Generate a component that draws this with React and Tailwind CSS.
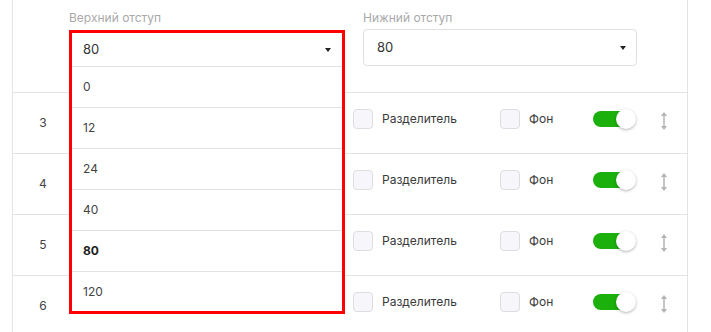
import React from 'react'

const OPTIONS = ['0', '12', '24', '40', '80', '120']
const ROWS = [3, 4, 5, 6]

function Caret() {
  return (
    <svg width="6" height="4" viewBox="0 0 6 4" className="shrink-0">
      <polygon points="0,0 6,0 3,4" fill="#222" />
    </svg>
  )
}

function Checkbox({ label, width }) {
  return (
    <div className={`flex items-center gap-[9px] ${width}`}>
      <div className="size-[20px] rounded-[4px] border border-[#dcdce2] bg-[#f7f7fb]" />
      <span className="text-[12px] text-[#3a3a3a]">{label}</span>
    </div>
  )
}

function Toggle() {
  return (
    <div className="relative w-[42px] h-[16px] rounded-full bg-[#1cb00c]">
      <div className="absolute right-[-1px] top-[-2px] size-[20px] rounded-full bg-white shadow-[0_1px_3px_rgba(0,0,0,0.3)]" />
    </div>
  )
}

function DragIcon() {
  return (
    <svg width="8" height="18" viewBox="0 0 8 18">
      <line x1="4" y1="3" x2="4" y2="15" stroke="#b3b3b3" strokeWidth="1.5" />
      <polygon points="4,0 7,4 1,4" fill="#b3b3b3" />
      <polygon points="4,18 7,14 1,14" fill="#b3b3b3" />
    </svg>
  )
}

export default function App() {
  return (
    <div className="relative w-[711px] h-[332px] overflow-hidden bg-white font-['Inter',sans-serif]">
      <div className="ml-3 w-[676px] border-x border-[#e3e3e3]">
        {/* top: margins */}
        <div className="flex h-[93px] border-b border-[#e3e3e3] pl-[56px] pt-[10px]">
          <div className="w-[294px]">
            <div className="text-[12px] text-[#a9a9a9] leading-[16px]">Верхний отступ</div>
          </div>
          <div>
            <div className="text-[12px] text-[#a9a9a9] leading-[16px]">Нижний отступ</div>
            <div className="mt-[3px] flex items-center justify-between w-[274px] h-[37px] rounded-[4px] border border-[#e0e0e0] pl-[13px] pr-[10px]">
              <span className="text-[13px] text-[#333]">80</span>
              <Caret />
            </div>
          </div>
        </div>

        {/* rows */}
        {ROWS.map(n => (
          <div key={n} className="flex h-[61px] border-b border-[#e3e3e3]">
            <div className="w-[60px] flex items-center justify-center text-[12px] text-[#444]">{n}</div>
            <div className="w-[280px]" />
            <div className="flex items-center pb-[9px]">
              <Checkbox label="Разделитель" width="w-[147px]" />
              <Checkbox label="Фон" width="w-[93px]" />
              <Toggle />
              <div className="ml-[25px] pt-[5px]">
                <DragIcon />
              </div>
            </div>
          </div>
        ))}
      </div>

      {/* open dropdown */}
      <div className="absolute left-[69px] top-[30px] w-[276px] border-[3px] border-[#ff0000] bg-white">
        <div className="flex items-center justify-between h-[33px] pl-[11px] pr-[11px]">
          <span className="text-[13px] text-[#333]">80</span>
          <Caret />
        </div>
        {OPTIONS.map((o, i) => (
          <div
            key={o}
            className={`flex items-center border-t border-[#e2e2e2] pl-[11px] text-[12px] ${i === OPTIONS.length - 1 ? 'h-[40px]' : 'h-[41px]'} ${o === '80' ? 'font-bold text-[#222]' : 'text-[#444]'}`}
          >
            {o}
          </div>
        ))}
      </div>
    </div>
  )
}
